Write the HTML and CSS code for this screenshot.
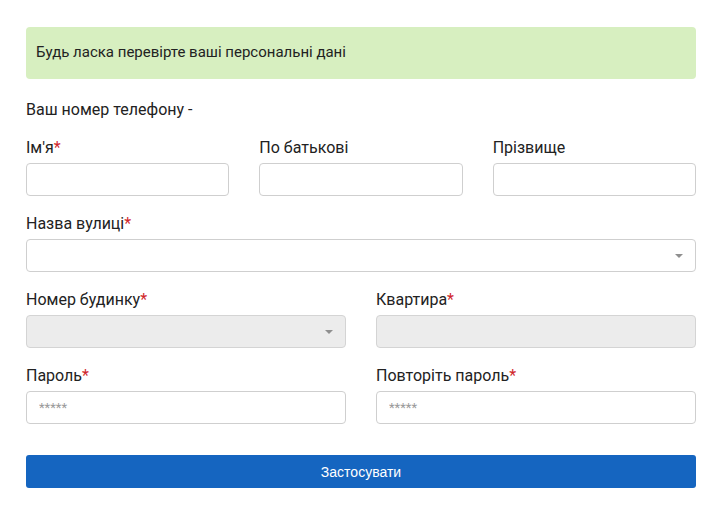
FILE: index.html
```html
<!DOCTYPE html>
<html lang="uk">
<head>
<meta charset="utf-8">
<title>Персональні дані</title>
<link rel="stylesheet" href="styles.css">
</head>
<body>
<div class="page">
  <div class="alert">Будь ласка перевірте ваші персональні дані</div>
  <div class="phone">Ваш номер телефону -</div>
  <form class="form">
    <div class="row row-3">
      <div class="field">
        <label class="label">Ім'я<span class="req">*</span></label>
        <input class="input" type="text">
      </div>
      <div class="field">
        <label class="label">По батькові</label>
        <input class="input" type="text">
      </div>
      <div class="field">
        <label class="label">Прізвище</label>
        <input class="input" type="text">
      </div>
    </div>
    <div class="row">
      <div class="field">
        <label class="label">Назва вулиці<span class="req">*</span></label>
        <div class="input select"><span class="arrow"></span></div>
      </div>
    </div>
    <div class="row row-2">
      <div class="field">
        <label class="label">Номер будинку<span class="req">*</span></label>
        <div class="input select disabled"><span class="arrow"></span></div>
      </div>
      <div class="field">
        <label class="label">Квартира<span class="req">*</span></label>
        <div class="input disabled"></div>
      </div>
    </div>
    <div class="row row-2">
      <div class="field">
        <label class="label">Пароль<span class="req">*</span></label>
        <input class="input" type="password" placeholder="*****">
      </div>
      <div class="field">
        <label class="label">Повторіть пароль<span class="req">*</span></label>
        <input class="input" type="password" placeholder="*****">
      </div>
    </div>
    <button class="btn" type="button">Застосувати</button>
  </form>
</div>
</body>
</html>
```
FILE: styles.css
```css
* { box-sizing: border-box; }
html, body { margin: 0; padding: 0; background: #fff; }
body {
  font-family: Roboto, "Liberation Sans", Arial, sans-serif;
  font-size: 16px;
  color: #222;
}
.page {
  padding: 27px 26px;
}
.alert {
  background: #d7efc0;
  border-radius: 4px;
  padding: 15px 10px 16px;
  font-size: 15px;
  line-height: 21px;
  color: #222;
}
.phone {
  margin-top: 20px;
  line-height: 21px;
}
.form {
  margin-top: 17px;
  display: flex;
  flex-direction: column;
  gap: 17px;
}
.row { display: grid; grid-template-columns: 1fr; }
.row-3 { grid-template-columns: 1fr 1fr 1fr; column-gap: 30px; }
.row-2 { grid-template-columns: 1fr 1fr; column-gap: 30px; }
.field { display: flex; flex-direction: column; }
.label {
  line-height: 21px;
  margin-bottom: 5px;
}
.req { color: #d0262b; }
.input {
  display: block;
  width: 100%;
  height: 33px;
  border: 1px solid #cfcfcf;
  border-radius: 4px;
  background: #fff;
  padding: 0 12px;
  font-family: Roboto, "Liberation Sans", Arial, sans-serif;
  font-size: 13px;
  color: #222;
  outline: none;
}
.input::placeholder { color: #9a9a9a; }
.select { position: relative; }
.disabled { background: #ececec; border-color: #d4d4d4; }
.arrow {
  position: absolute;
  right: 12px;
  top: 14px;
  width: 0; height: 0;
  border-left: 4px solid transparent;
  border-right: 4px solid transparent;
  border-top: 4px solid #8f8f8f;
}
.btn {
  margin-top: 14px;
  height: 33px;
  width: 100%;
  border: none;
  border-radius: 3px;
  background: #1565c0;
  color: #fff;
  font-family: "Liberation Sans", Arial, sans-serif;
  font-size: 14px;
  cursor: pointer;
}
```
